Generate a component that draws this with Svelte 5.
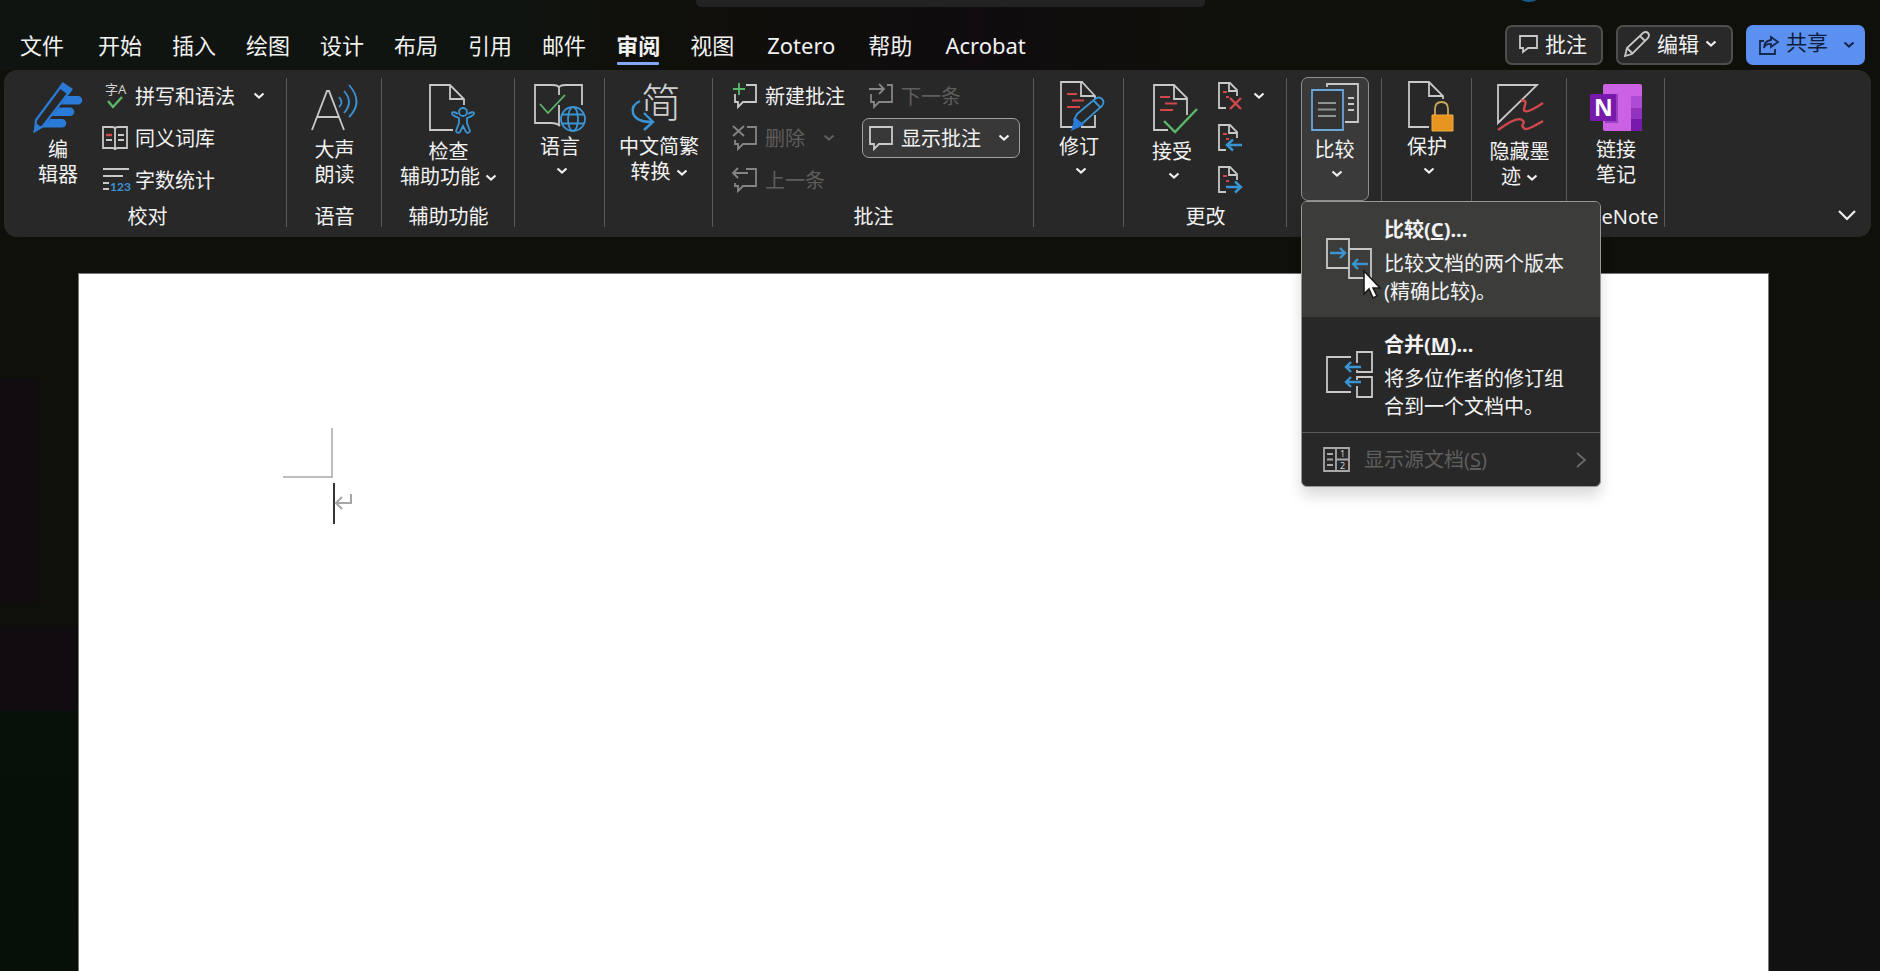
<script>
  const tabs = ['文件', '开始', '插入', '绘图', '设计', '布局', '引用', '邮件', '审阅', '视图', 'Zotero', '帮助', 'Acrobat'];
  let active = $state('审阅');
  let menuOpen = $state(true);
</script>

{#snippet chev()}
  <svg class="chev" viewBox="0 0 12 8" aria-hidden="true"><path d="M1.5 1.5 6 5.5l4.5-4" /></svg>
{/snippet}

{#snippet bubble(kind)}
  <svg class="ico" viewBox="0 0 24 26" aria-hidden="true">
    {#if kind === 'plain'}
      <path d="M1 2h22v17H10l-5 5v-5H1z" />
    {:else if kind === 'new'}
      <path d="M13 2h10v17H10l-5 5v-5H2v-8" />
      <path class="green" d="M6 0v12M0 6h12" />
    {:else if kind === 'delete'}
      <path d="M14 2h9v17H10l-5 5v-5H2v-4" />
      <path d="m0 1 11 10M11 1 0 11" />
    {:else if kind === 'next'}
      <path d="M18 2h5v17H10l-5 5v-5H2v-8M0 6h15M10 1l5 5-5 5" />
    {:else}
      <path d="M13 2h10v17H10l-5 5v-5H2v-3M0 6h15M5 1 0 6l5 5" />
    {/if}
  </svg>
{/snippet}

{#snippet change(kind)}
  <svg class="ico" viewBox="0 0 24 28" aria-hidden="true">
    <path d="M8 26H1V1h11l7 7v6M11 1v8h8" />
    <path class="red" d="M5 10h4M8 15h3" />
    {#if kind === 'reject'}
      <path class="red thick" d="m12 16 11 11M23 16 12 27" />
    {:else if kind === 'prev'}
      <path class="blue thick" d="M24 21H10M15 15.500l-6 5.500 6 5.500" />
    {:else}
      <path class="blue thick" d="M8 21h14M17 15.500l6 5.500-6 5.500" />
    {/if}
  </svg>
{/snippet}

<div class="app">
  <div class="title"><div class="search"></div><div class="avatar"></div></div>

  <header>
    <nav aria-label="功能区选项卡">
      {#each tabs as tab}
        <button class="tab" class:active={tab === active} class:latin={/^[A-Z]/.test(tab)} onclick={() => (active = tab)}>{tab}</button>
      {/each}
    </nav>
    <div class="actions">
      <button class="action">
        <svg width="19" height="18" viewBox="0 0 19 18" aria-hidden="true"><path d="M1 1h17v12H9l-5 4v-4H1z" /></svg>
        批注
      </button>
      <button class="action edit">
        <svg width="28" height="28" viewBox="0 0 28 28" aria-hidden="true"><path d="m2 26 2-8L20 3q3-2 5 0t0 5L9 24zM17 6l5 5M4 18l5 5" /></svg>
        编辑 {@render chev()}
      </button>
      <button class="action share">
        <svg width="20" height="20" viewBox="0 0 20 20" aria-hidden="true"><path d="M5 6H1v13h15v-5M12 2l7 5-7 5V9q-5-1-7 4 0-7 7-8z" /></svg>
        <span>共享</span> {@render chev()}
      </button>
    </div>
  </header>

  <div class="ribbon">
    <section class="group proof">
      <div class="body">
        <button class="big mid">
          <svg viewBox="0 0 52 52" aria-hidden="true">
            <path class="solid" d="M35 15h11a4 4 0 0 1 0 8.500H29zM26.500 26.500h11.500a4 4 0 0 1 0 8.500H20zM18 38h12a4 4 0 0 1 0 8.500H10z" />
            <path class="pen" d="M30 4 38 10 11 45 3 50 4 39z" />
            <path class="solid" d="m30.500 1 10.500 7-4.500 6-9.500-7zM1 52l3-10 6 5z" />
          </svg>
          <span>编<br />辑器</span>
        </button>
        <div class="stack">
          <button class="small">
            <svg class="ico wide" viewBox="0 0 27 28" aria-hidden="true">
              <text x="3" y="12" class="tiny">字A</text><path class="green thick" d="m6 19 5 6L20 15" />
            </svg>
            拼写和语法 <i class="push">{@render chev()}</i>
          </button>
          <button class="small">
            <svg class="ico wide" viewBox="0 0 27 26" aria-hidden="true">
              <path d="M1 2h9q3 0 3 2 0-2 3-2h9v21h-9q-3 0-3 2 0-2-3-2H1zM13 4v19M4 15h6M16 10h6M16 15h6" />
              <path class="red thick" d="M4 10h6" />
            </svg>
            同义词库
          </button>
          <button class="small">
            <svg class="ico wide" viewBox="0 0 27 26" aria-hidden="true">
              <path d="M1 2h26M1 9h20M1 16h6M1 22h6" /><text x="8" y="24" class="digits">123</text>
            </svg>
            字数统计
          </button>
        </div>
      </div>
      <h2>校对</h2>
    </section>

    <section class="group">
      <div class="body">
        <button class="big mid">
          <svg viewBox="0 0 52 52" aria-hidden="true">
            <path d="M3 49 18 10h2l15 39M8 36h22" />
            <path class="blue" d="M30 16q5 6 0 10M35 10q10 11 0 22M40 4q15 17 0 32" />
          </svg>
          <span>大声<br />朗读</span>
        </button>
      </div>
      <h2>语音</h2>
    </section>

    <section class="group">
      <div class="body">
        <button class="big low">
          <svg viewBox="0 0 52 52" aria-hidden="true">
            <path d="M31 49H8V4h20l14 14v6M28 4v14h14" />
            <circle class="blue" cx="41" cy="31" r="4" />
            <path class="blue" d="M36 33q-5-3-6-1t7 5v5l-3 8q1 3 4 1l3-6 3 6q3 2 4-1l-3-8v-5q8-3 7-5t-6 1" />
          </svg>
          <span>检查<br />辅助功能 {@render chev()}</span>
        </button>
      </div>
      <h2>辅助功能</h2>
    </section>

    <section class="group">
      <div class="body">
        <button class="big">
          <svg viewBox="0 0 52 52" aria-hidden="true">
            <path d="M48 24V4H32q-7 0-7 3 0-3-7-3H1v38h16q6 0 9 3M25 7v7M25 24v20" />
            <path class="green" d="m6 23 8 9 17-18" />
            <g class="blue"><circle cx="39" cy="38" r="12" /><ellipse cx="39" cy="38" rx="5" ry="12" /><path d="M28 33.500h22M28 42.500h22" /></g>
          </svg>
          <span>语言<br /><b class="under">{@render chev()}</b></span>
        </button>
      </div>
    </section>

    <section class="group">
      <div class="body">
        <button class="big">
          <svg viewBox="0 0 52 52" aria-hidden="true">
            <text x="8" y="36" class="jian">简</text>
            <path class="gap" d="M7 30h11v12H7z" />
            <path class="blue thick" d="M7 20q-9 4-7 12 3 9 19 9M11 32l9 9-9 8" />
          </svg>
          <span>中文简繁<br />转换 {@render chev()}</span>
        </button>
      </div>
    </section>

    <section class="group comments">
      <div class="body">
        <button class="small">{@render bubble('new')}新建批注</button>
        <button class="small second off" disabled>{@render bubble('next')}下一条</button>
        <button class="small off" disabled>{@render bubble('delete')}删除 <i class="push">{@render chev()}</i></button>
        <button class="small second boxed">{@render bubble('plain')}显示批注 <i class="end">{@render chev()}</i></button>
        <button class="small off" disabled>{@render bubble('prev')}上一条</button>
      </div>
      <h2>批注</h2>
    </section>

    <section class="group">
      <div class="body">
        <button class="big">
          <svg viewBox="0 0 52 52" aria-hidden="true">
            <path d="M20 46H8V1h21l13 14v3M42 34v12H28M28 1v14h14" />
            <path class="red" d="M14 13h10M19 19.500h12M14 26h13" />
            <path class="blue" d="m21 39 3-6 18-15q4-3 7 0t0 7L31 41l-6 4zM40 19l7 7" />
            <path class="solid" d="m18 50 4-14 9 8z" />
          </svg>
          <span>修订<br /><b class="under">{@render chev()}</b></span>
        </button>
      </div>
    </section>

    <section class="group changes">
      <div class="body">
        <button class="big low">
          <svg viewBox="0 0 52 52" aria-hidden="true">
            <path d="M22 49H8V4h20l13 13v17M28 4v14h13" />
            <path class="red" d="M14 16h10M19 22.500h12M14 29h13" />
            <path class="green thick" d="m18 40 11 11 22-23" />
          </svg>
          <span>接受<br /><b class="under">{@render chev()}</b></span>
        </button>
        <div class="stack">
          <button class="small" aria-label="拒绝">{@render change('reject')}<i>{@render chev()}</i></button>
          <button class="small" aria-label="上一处">{@render change('prev')}</button>
          <button class="small" aria-label="下一处">{@render change('next')}</button>
        </div>
      </div>
      <h2>更改</h2>
    </section>

    <section class="group compare">
      <div class="body">
        <button class="big mid pressed" aria-expanded={menuOpen} onclick={() => (menuOpen = !menuOpen)}>
          <svg viewBox="0 0 52 52" aria-hidden="true">
            <path d="M18 6V3h31v38H36M39 17h6M39 23h6M39 29h6" />
            <path class="front" d="M3 9h31v40H3z" />
            <path class="gray" d="M9 22h18M9 28.500h18M9 35h18" />
          </svg>
          <span>比较<br /><b class="under">{@render chev()}</b></span>
        </button>
      </div>

      {#if menuOpen}
        <div class="menu" role="menu">
          <button class="item hover" role="menuitem">
            <svg viewBox="0 0 48 48" aria-hidden="true">
              <path d="M1 3h22v29H1zM23 13h22v29H23z" />
              <path class="blue thick" d="M4 17h15M14 12l5 5-5 5M42 28H27M32 23l-5 5 5 5" />
            </svg>
            <span><strong>比较(<u>C</u>)...</strong>比较文档的两个版本(精确比较)。</span>
            <svg class="pointer" viewBox="0 0 20 32" aria-hidden="true"><path d="M2 2v23l5-5 4 9 4-2-4-8h7z" /></svg>
          </button>
          <button class="item" role="menuitem">
            <svg viewBox="0 0 48 48" aria-hidden="true">
              <path d="M25 6H1v35h24M31 12V1h15v20H31v-2M31 29v-3h15v20H31V35" />
              <path class="blue thick" d="M35 16H20M25 11l-5 5 5 5M35 31H20M25 26l-5 5 5 5" />
            </svg>
            <span><strong>合并(<u>M</u>)...</strong>将多位作者的修订组合到一个文档中。</span>
          </button>
          <button class="source" role="menuitem" disabled>
            <svg viewBox="0 0 27 26" width="27" height="26" aria-hidden="true">
              <path d="M1 1h25v23H1zM13 1v23M13 12.500h13M4 7h6M4 12.500h6M4 18h6" />
              <text x="17" y="10" class="num">1</text><text x="17" y="22" class="num">2</text>
            </svg>
            显示源文档(<u>S</u>)
            <svg class="more" viewBox="0 0 10 16" width="10" height="16" aria-hidden="true"><path d="m1 1 8 7-8 7" /></svg>
          </button>
        </div>
      {/if}
    </section>

    <section class="group">
      <div class="body">
        <button class="big">
          <svg viewBox="0 0 52 52" aria-hidden="true">
            <path d="M28 46H8V1h20l14 14v3M28 1v14h14" />
            <path class="gold" d="M34 35v-7q0-7 6.500-7t6.500 7v7" />
            <path class="lock" d="M31 34h21v16H31z" />
          </svg>
          <span>保护<br /><b class="under">{@render chev()}</b></span>
        </button>
      </div>
    </section>

    <section class="group">
      <div class="body">
        <button class="big low">
          <svg viewBox="0 0 52 52" aria-hidden="true">
            <path d="M4 4h39L4 42z" />
            <path class="red thick" d="M27 20q6-2 4 4t0 6q3 2 18-8M4 49q19-14 24-10 3 2 1 4t2 5q3 1 18-8" />
          </svg>
          <span>隐藏墨<br />迹 {@render chev()}</span>
        </button>
      </div>
    </section>

    <section class="group">
      <div class="body">
        <button class="big mid">
          <svg class="note" viewBox="0 0 52 52" aria-hidden="true">
            <rect x="13" y="3" width="39" height="47" rx="2" fill="#cb62e3" />
            <path d="M41 15h11v12H41z" fill="#ae4bd5" /><path d="M41 27h11v11H41z" fill="#9332bf" />
            <path d="M41 38h11v10q0 2-2 2h-9z" fill="#7719aa" />
            <path d="M15 13h13v29H15z" fill="#9a3fbd" />
            <rect x="0" y="13" width="26" height="27" rx="1" fill="#7719aa" />
            <text x="4" y="35" class="n">N</text>
          </svg>
          <span>链接<br />笔记</span>
        </button>
      </div>
      <h2>OneNote</h2>
    </section>

    <button class="collapse" aria-label="折叠功能区">
      <svg viewBox="0 0 18 11" width="18" height="11" aria-hidden="true"><path d="m1 1 8 8 8-8" /></svg>
    </button>
  </div>

  <main>
    <article class="page">
      <div class="corner"></div>
      <div class="line">
        <span class="caret"></span>
        <svg viewBox="0 0 18 18" width="18" height="18" aria-hidden="true"><path d="M16 1v9H2M7 4l-6 6 6 6" /></svg>
      </div>
    </article>
  </main>
</div>

<style>
  :global(body) { margin: 0; background: #10100a; }
  * { box-sizing: border-box; }
  .app {
    min-height: 100vh;
    display: flex;
    flex-direction: column;
    overflow: hidden;
    color: #f2f2f2;
    font: 20px/25px "Noto Sans", "Noto Sans CJK SC", sans-serif;
    background:
      linear-gradient(#110c10, #110c10) 0 378px / 38px 225px no-repeat,
      linear-gradient(#110c0f, #110c0f) 0 625px / 76px 86px no-repeat,
      linear-gradient(#071009, #070e08) 0 711px / 100px 400px no-repeat,
      linear-gradient(#111, #111) 100% 600px / 200px 500px no-repeat,
      linear-gradient(90deg, #0f1410 26%, #10100a 34%, #100c0f 52%, #10100a 65%) 0 0 / 100% 70px no-repeat,
      #10100a;
  }
  button { border: 0; margin: 0; padding: 0; background: none; color: inherit; font: inherit; white-space: nowrap; cursor: pointer; }
  svg { flex: none; fill: none; stroke: #c8c8c8; stroke-width: 1.8; overflow: visible; }
  svg text { stroke: none; fill: #d0d0d0; }
  i { font-style: normal; }

  .title { display: flex; height: 7px; overflow: hidden; padding-left: 37%; }
  .search { flex: 0 0 43%; background: #232323; border-radius: 0 0 5px 5px; }
  .avatar { width: 32px; height: 32px; margin: -30px 0 0 26%; border-radius: 50%; background: #1b5a84; }

  header { display: flex; align-items: center; justify-content: space-between; height: 63px; padding: 13px 15px 0 5px; }
  nav { display: flex; height: 50px; }
  .tab { position: relative; padding: 0 15px; font-size: 22px; }
  .tab:first-child { margin-right: 4px; }
  .latin { margin: 0 3px; }
  .tab.active { font-weight: 700; }
  .tab.active::after { content: ""; position: absolute; left: 16px; right: 16px; bottom: 5px; height: 3px; background: #83a7f3; border-radius: 1px; }
  .actions { display: flex; gap: 13px; }
  .action { display: flex; align-items: center; gap: 7px; height: 40px; padding: 0 14px 2px 12px; border: 2px solid #4e4e4e; border-radius: 7px; background: #292929; font-size: 21px; }
  .edit { padding: 0 14px 2px 5px; gap: 6px; }
  .share { padding: 0 8px 0 11px; border-color: #5b8ff0; background: #5b8ff0; color: #101d38; }
  .share svg { stroke: #16284c; }
  .share span { padding-bottom: 5px; margin-right: 8px; }

  .ribbon {
    display: grid;
    grid-template-columns: 283px 95px 133px 90px 108px 321px 90px 163px 95px 90px 95px 98px 1fr;
    margin: 0 9px 0 4px;
    padding: 5px 0;
    border-radius: 13px;
    background: #282828;
  }
  .group { position: relative; display: flex; flex-direction: column; }
  .group::after { content: ""; position: absolute; right: 0; top: 3px; bottom: 5px; width: 1px; background: #5a5a5a; }
  .body { display: flex; justify-content: center; height: 127px; }
  h2 { margin: 0; font: inherit; line-height: 30px; text-align: center; }

  .big { display: flex; flex-direction: column; align-items: center; align-self: flex-start; margin-top: 2px; padding-top: 4px; gap: 1px; height: 124px; }
  .big > svg { width: 52px; height: 52px; }
  .mid { gap: 4px; }
  .low { gap: 6px; }
  .under { display: block; line-height: 21px; padding-left: 4px; }
  .chev { width: 12px; height: 8px; stroke: #f0f0f0; stroke-width: 2.200; vertical-align: 2px; }
  .share .chev { stroke: #16284c; }

  .stack { display: flex; flex-direction: column; }
  .small { display: flex; align-items: center; gap: 8px; height: 42px; }
  .small i { display: flex; align-items: center; }
  .push { margin-left: 10px; }
  .ico { width: 24px; height: 28px; }
  .ico.wide { width: 27px; margin-right: -2px; }
  .off { color: #5e5e5e; }
  .off svg { stroke: #858585; }
  .off .chev { stroke: #5e5e5e; }

  .proof .body { justify-content: flex-start; padding-left: 28px; gap: 18px; }
  .proof .big { width: 52px; }
  .proof h2 { padding-left: 4px; }
  .comments .body { display: grid; grid-template: repeat(3, 42px) / 129px 158px; justify-content: start; align-items: center; padding-left: 20px; }
  .second { padding: 0 9px 0 7px; }
  .boxed { height: 40px; padding-left: 6px; border: 1px solid #a0a0a0; border-radius: 7px; background: #383838; }
  .end { margin-left: auto; }
  .changes .body { justify-content: flex-start; padding-left: 17px; gap: 15px; }
  .changes .big { width: 62px; }
  .changes .small { gap: 11px; }

  .pressed { width: 68px; border: 1px solid #8e8e8e; border-radius: 7px; background: #3a3a3a; padding-top: 3px; }

  .green { stroke: #5cb869; }
  .red { stroke: #d1474b; }
  .blue { stroke: #3a94d3; }
  .gray { stroke: #8e9494; }
  .thick { stroke-width: 2.400; }
  .solid { fill: #2a7bd8; stroke: none; }
  .pen { fill: #282828; stroke: #2a7bd8; stroke-width: 2.200; }
  .gap { fill: #282828; stroke: none; }
  .front { fill: #333; stroke: #69a6dc; }
  .gold { stroke: #c8a75c; }
  .lock { fill: #e8951f; stroke: #f2ac42; stroke-width: 1; }
  .note { stroke: none; }
  .tiny { font-size: 13px; }
  svg .digits { font-size: 12px; font-family: Lato, sans-serif; font-weight: 700; fill: #3a94d3; }
  .jian { font-size: 40px; font-weight: 300; }
  svg .n { font-size: 23px; font-weight: 700; fill: #fff; }
  .num { font-size: 9px; }

  .menu {
    position: absolute;
    z-index: 2;
    top: 126px;
    left: 14px;
    width: 300px;
    border: 1px solid #989898;
    border-radius: 6px;
    background: #282828;
    box-shadow: 0 9px 14px rgba(0, 0, 0, 0.14);
    overflow: hidden;
  }
  .item { position: relative; display: flex; align-items: center; gap: 10px; width: 100%; height: 115px; padding: 0 24px; text-align: left; }
  .item span { width: 184px; line-height: 28px; white-space: normal; }
  .item > svg:first-child { width: 48px; height: 48px; }
  .item strong { display: block; line-height: 32px; padding-bottom: 4px; }
  .hover { background: #3c3d3b; }
  .item .pointer { position: absolute; left: 60px; top: 67px; width: 20px; height: 32px; fill: #fff; stroke: #1c1c1c; stroke-width: 1.600; }
  .source { display: flex; align-items: center; width: 100%; height: 54px; padding: 0 14px 0 21px; border-top: 1px solid #5a5a5a; color: #5e5e5e; }
  .source svg:first-child { margin-right: 14px; stroke: #a8a8a8; }
  .source svg.more { margin-left: auto; stroke: #6a6a6a; }

  .collapse { align-self: end; justify-self: end; width: 48px; height: 38px; }
  .collapse svg { stroke: #eee; stroke-width: 2.200; }

  main { flex: 1; display: flex; padding: 37px 112px 0 79px; }
  .page { flex: 1; background: #fff; box-shadow: 0 0 0 1px #777; }
  .corner { width: 50px; height: 50px; margin: 154px 0 0 204px; border: solid #bdbdbd; border-width: 0 2px 2px 0; }
  .line { display: flex; align-items: center; margin: 5px 0 0 254px; height: 41px; }
  .caret { width: 2px; height: 100%; background: #333; }
  .line svg { stroke: #a6a6a6; stroke-width: 2; margin-bottom: 4px; }
</style>
